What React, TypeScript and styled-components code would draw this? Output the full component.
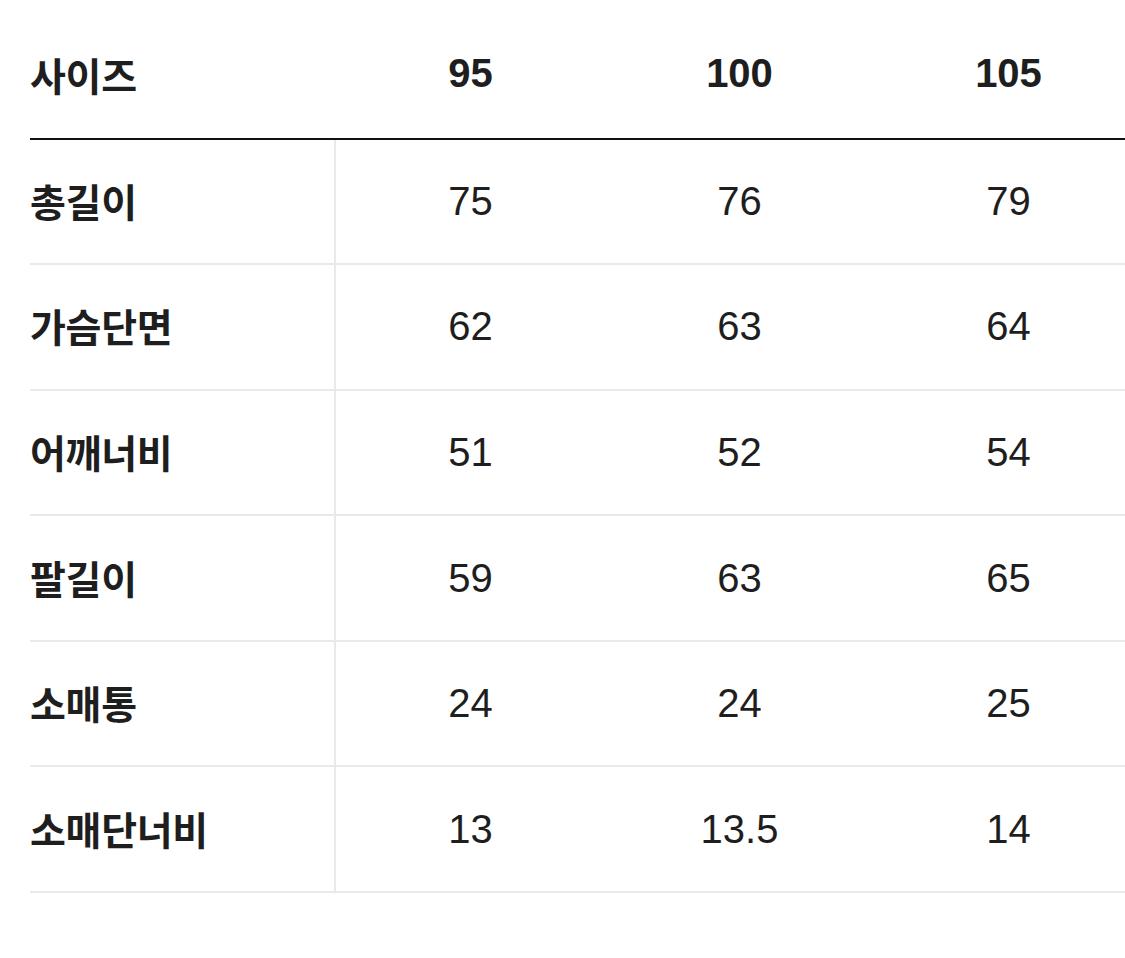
import React from 'react';
import styled, { createGlobalStyle } from 'styled-components';

const GlobalStyle = createGlobalStyle`
  html, body {
    margin: 0;
    padding: 0;
    background: #fff;
    overflow: hidden;
  }
  body {
    font-family: 'Noto Sans CJK KR', 'Noto Sans', sans-serif;
    color: #222;
  }
`;

const sizes = ['95', '100', '105'];

const rows: { label: string; values: string[] }[] = [
  { label: '총길이', values: ['75', '76', '79'] },
  { label: '가슴단면', values: ['62', '63', '64'] },
  { label: '어깨너비', values: ['51', '52', '54'] },
  { label: '팔길이', values: ['59', '63', '65'] },
  { label: '소매통', values: ['24', '24', '25'] },
  { label: '소매단너비', values: ['13', '13.5', '14'] },
];

const Page = styled.div`
  width: 1125px;
  height: 958px;
  padding-left: 30px;
  box-sizing: border-box;
  overflow: hidden;
`;

const Table = styled.div`
  width: 1113px;
  display: flex;
  flex-direction: column;
`;

const Row = styled.div<{ $head?: boolean }>`
  display: grid;
  grid-template-columns: 306px repeat(3, 269px);
  box-sizing: border-box;
  height: ${(p) => (p.$head ? '139.5px' : '125.6px')};
  border-bottom: 2px solid ${(p) => (p.$head ? '#111' : '#e9e9e9')};
`;

const Label = styled.div<{ $head?: boolean }>`
  display: flex;
  align-items: center;
  font-size: 39px;
  font-weight: 700;
  letter-spacing: -0.3px;
  color: #1e1e1e;
  border-right: ${(p) => (p.$head ? 'none' : '2px solid #e9e9e9')};
  padding-top: ${(p) => (p.$head ? '10px' : '0')};
  padding-bottom: ${(p) => (p.$head ? '0' : '3px')};
`;

const Cell = styled.div<{ $head?: boolean }>`
  display: flex;
  align-items: center;
  justify-content: center;
  font-family: 'Liberation Sans', 'Noto Sans', sans-serif;
  font-size: 40px;
  font-weight: ${(p) => (p.$head ? 700 : 400)};
  color: #1e1e1e;
  padding-top: ${(p) => (p.$head ? '10px' : '0')};
`;

export default function App() {
  return (
    <Page>
      <GlobalStyle />
      <Table>
        <Row $head>
          <Label $head>사이즈</Label>
          {sizes.map((s) => (
            <Cell $head key={s}>
              {s}
            </Cell>
          ))}
        </Row>
        {rows.map((r) => (
          <Row key={r.label}>
            <Label>{r.label}</Label>
            {r.values.map((v, i) => (
              <Cell key={i}>{v}</Cell>
            ))}
          </Row>
        ))}
      </Table>
    </Page>
  );
}
